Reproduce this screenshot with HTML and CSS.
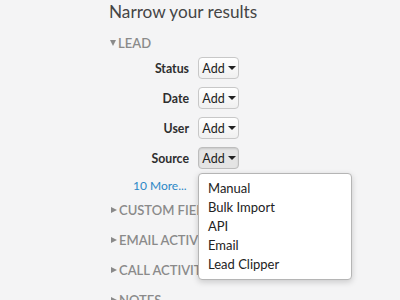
FILE: index.html
```html
<!DOCTYPE html>
<html lang="en">
<head>
    <meta charset="UTF-8">
    <title>Narrow your results</title>
    <link rel="stylesheet" href="styles.css">
</head>
<body>
    <div class="sidebar">
        <h1>Narrow your results</h1>
        <div class="section open">
            <div class="section-title"><span class="caret down"></span>LEAD</div>
            <div class="filters">
                <div class="filter-row">
                    <span class="filter-label">Status</span>
                    <button class="add-btn">Add <span class="arrow"></span></button>
                </div>
                <div class="filter-row">
                    <span class="filter-label">Date</span>
                    <button class="add-btn">Add <span class="arrow"></span></button>
                </div>
                <div class="filter-row">
                    <span class="filter-label">User</span>
                    <button class="add-btn">Add <span class="arrow"></span></button>
                </div>
                <div class="filter-row">
                    <span class="filter-label">Source</span>
                    <div class="dropdown">
                        <button class="add-btn active">Add <span class="arrow"></span></button>
                        <ul class="dropdown-menu">
                            <li>Manual</li>
                            <li>Bulk Import</li>
                            <li>API</li>
                            <li>Email</li>
                            <li>Lead Clipper</li>
                        </ul>
                    </div>
                </div>
            </div>
            <a class="more-link" href="#">10 More...</a>
        </div>
        <div class="section"><div class="section-title"><span class="caret right"></span>CUSTOM FIELDS</div></div>
        <div class="section"><div class="section-title"><span class="caret right"></span>EMAIL ACTIVITY</div></div>
        <div class="section"><div class="section-title"><span class="caret right"></span>CALL ACTIVITY</div></div>
        <div class="section"><div class="section-title"><span class="caret right"></span>NOTES</div></div>
    </div>
</body>
</html>
```

FILE: styles.css
```css
body {
    font-family: Lato, "Open Sans", sans-serif;
    background-color: #f4f4f5;
    color: #333333;
    margin: 0;
    overflow: hidden;
}
.sidebar {
    padding: 0 0 0 109px;
}
h1 {
    font-size: 17.2px;
    font-weight: 400;
    color: #454545;
    margin: 0;
    padding-top: 1px;
    line-height: 22px;
}
.section-title {
    display: flex;
    align-items: center;
    font-size: 13px;
    font-weight: 600;
    color: #8a8a8a;
    height: 30px;
}
.section.open .section-title {
    margin-top: 6px;
    height: 28px;
}
.caret {
    width: 0;
    height: 0;
    margin-right: 2px;
}
.caret.down {
    margin-left: 1px;
    border-left: 3.5px solid transparent;
    border-right: 3.5px solid transparent;
    border-top: 6px solid #8a8a8a;
}
.caret.right {
    margin-left: 2px;
    border-top: 3.5px solid transparent;
    border-bottom: 3.5px solid transparent;
    border-left: 6px solid #8a8a8a;
}
.filters {
    display: flex;
    flex-direction: column;
    gap: 8px;
}
.filter-row {
    display: flex;
    align-items: center;
    gap: 9px;
}
.filter-label {
    width: 80px;
    text-align: right;
    font-size: 12.3px;
    font-weight: 700;
    color: #2e2e2e;
}
.add-btn {
    font-family: inherit;
    font-size: 12.5px;
    color: #222222;
    background: linear-gradient(#ffffff, #f0f0f0);
    border: 1px solid #c8c8c8;
    border-radius: 4px;
    height: 22px;
    width: 41px;
    padding: 0 0 0 1px;
    display: flex;
    align-items: center;
    justify-content: center;
    gap: 3px;
}
.add-btn.active {
    background: #e4e4e4;
    border-color: #bdbdbd;
    box-shadow: inset 0 1px 2px rgba(0, 0, 0, 0.12);
}
.arrow {
    width: 0;
    height: 0;
    border-left: 4px solid transparent;
    border-right: 4px solid transparent;
    border-top: 4px solid #222222;
}
.dropdown {
    position: relative;
}
.dropdown-menu {
    position: absolute;
    top: 26px;
    left: 0;
    width: 154px;
    margin: 0;
    padding: 5px 0 5px 9px;
    box-sizing: border-box;
    list-style: none;
    background: #ffffff;
    border: 1px solid #b5b5b5;
    border-radius: 4px;
    box-shadow: 0 2px 6px rgba(0, 0, 0, 0.18);
    z-index: 2;
}
.dropdown-menu li {
    font-size: 13px;
    line-height: 19px;
    color: #222222;
}
.more-link {
    display: block;
    margin: 8px 0 0 24px;
    font-size: 12px;
    color: #2b87c6;
    text-decoration: none;
    line-height: 18px;
}
```
